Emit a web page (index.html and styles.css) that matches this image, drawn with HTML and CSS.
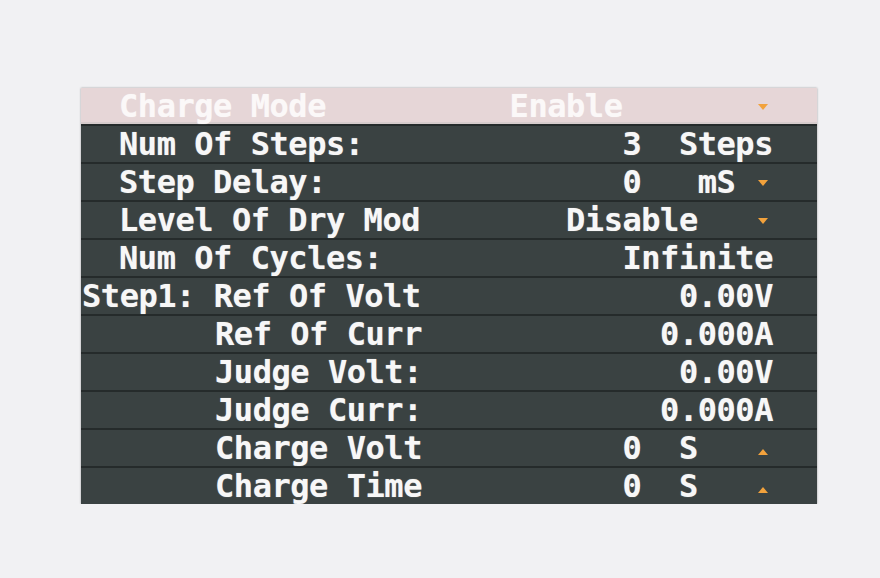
FILE: index.html
```
<!DOCTYPE html>
<html lang="en">
<head>
    <meta charset="UTF-8">
    <meta name="viewport" content="width=device-width, initial-scale=1.0">
    <title>Charge Settings</title>
    <link rel="stylesheet" href="styles.css">
</head>
<body>

<div class="screen">
    <div class="row row--selected">
        <span class="label">Charge Mode</span>
        <span class="val">Enable       <i class="tri tri--down"></i></span>
    </div>
    <div class="row">
        <span class="label">Num Of Steps:</span>
        <span class="val">3  Steps</span>
    </div>
    <div class="row">
        <span class="label">Step Delay:</span>
        <span class="val">0   mS <i class="tri tri--down"></i></span>
    </div>
    <div class="row">
        <span class="label">Level Of Dry Mod</span>
        <span class="val">Disable   <i class="tri tri--down"></i></span>
    </div>
    <div class="row">
        <span class="label">Num Of Cycles:</span>
        <span class="val">Infinite</span>
    </div>
    <div class="row row--step">
        <span class="label">Step1: Ref Of Volt</span>
        <span class="val">0.00V</span>
    </div>
    <div class="row row--sub">
        <span class="label">Ref Of Curr</span>
        <span class="val">0.000A</span>
    </div>
    <div class="row row--sub">
        <span class="label">Judge Volt:</span>
        <span class="val">0.00V</span>
    </div>
    <div class="row row--sub">
        <span class="label">Judge Curr:</span>
        <span class="val">0.000A</span>
    </div>
    <div class="row row--sub">
        <span class="label">Charge Volt</span>
        <span class="val">0  S   <i class="tri tri--up"></i></span>
    </div>
    <div class="row row--sub">
        <span class="label">Charge Time</span>
        <span class="val">0  S   <i class="tri tri--up"></i></span>
    </div>
</div>

</body>
</html>
```

FILE: styles.css
```
body {
    margin: 0;
    padding: 88px 0 0 81px;
    background-color: #f1f1f3;
    font-family: 'DejaVu Sans Mono', 'Liberation Mono', monospace;
}
.screen {
    width: 736px;
    background-color: #3a4242;
    box-shadow: 0 0 2px rgba(0, 0, 0, 0.35);
    color: #f7f7f7;
    font-size: 32px;
    font-weight: bold;
    letter-spacing: -0.45px;
}
.row {
    display: flex;
    align-items: center;
    height: 36px;
    padding: 0 44px 0 38px;
    border-top: 2px solid #252b2b;
    white-space: pre;
    text-shadow: 0 0 1px rgba(255, 255, 255, 0.5);
}
.row--selected {
    border-top: none;
    background-color: #e6d6d7;
    color: #fbf8f8;
    box-shadow: inset 0 -2px 0 #d6cccc;
}
.row--step {
    padding-left: 1px;
}
.row--sub {
    padding-left: 134px;
}
.val {
    margin-left: auto;
}
.tri {
    display: inline-block;
    position: relative;
    width: 18.8px;
    height: 20px;
    vertical-align: middle;
}
.tri::after {
    content: '';
    position: absolute;
    left: 4px;
    border-left: 5px solid transparent;
    border-right: 5px solid transparent;
}
.tri--down::after {
    top: 6px;
    border-top: 6px solid #f2a23c;
}
.tri--up::after {
    top: 9px;
    border-bottom: 6px solid #f2a23c;
}
```
